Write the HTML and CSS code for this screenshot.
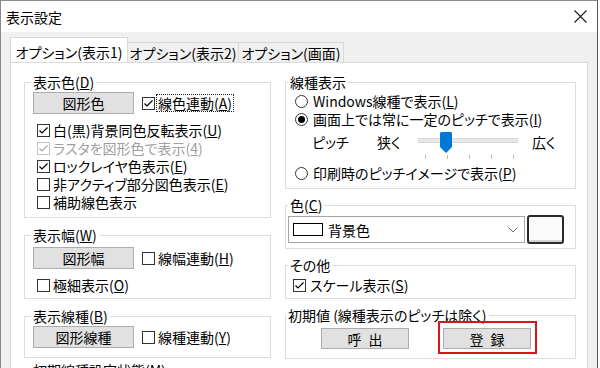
FILE: index.html
```html
<!DOCTYPE html>
<html lang="ja">
<head>
<meta charset="utf-8">
<title>表示設定</title>
<link rel="stylesheet" href="styles.css">
</head>
<body>
<div class="window">
  <div class="titlebar">
    <span class="title">表示設定</span>
    <svg class="close" width="13" height="13" viewBox="0 0 13 13"><path d="M0.5 0.5L12.5 12.5M12.5 0.5L0.5 12.5" stroke="#1a1a1a" stroke-width="1.1" fill="none"/></svg>
  </div>
  <div class="client">
    <div class="tabs">
      <div class="tab tab1 active">オプション(表示1)</div>
      <div class="tab tab2">オプション(表示2)</div>
      <div class="tab tab3">オプション(画面)</div>
    </div>
    <div class="panel">
      <div class="col col-left">
        <fieldset class="grp">
          <legend>表示色(<u>D</u>)</legend>
          <div class="body b-color">
            <div class="btnrow">
              <button class="btn btn-fig">図形色</button>
              <label class="chk"><svg class="cb" width="13" height="13" viewBox="0 0 13 13"><rect x="0.5" y="0.5" width="12" height="12" fill="#fff" stroke="#333"/><path d="M2.5 6.5L5 9L10.5 3.5" fill="none" stroke="#000" stroke-width="1.2"/></svg><span class="focus">線色連動(<u>A</u>)</span></label>
            </div>
            <div class="list">
              <label class="chk"><svg class="cb" width="13" height="13" viewBox="0 0 13 13"><rect x="0.5" y="0.5" width="12" height="12" fill="#fff" stroke="#333"/><path d="M2.5 6.5L5 9L10.5 3.5" fill="none" stroke="#000" stroke-width="1.2"/></svg><span>白(黒)背景同色反転表示(<u>U</u>)</span></label>
              <label class="chk dis"><svg class="cb" width="13" height="13" viewBox="0 0 13 13"><rect x="0.5" y="0.5" width="12" height="12" fill="#fff" stroke="#c4c4c4"/><path d="M2.5 6.5L5 9L10.5 3.5" fill="none" stroke="#a8a8a8" stroke-width="1.2"/></svg><span>ラスタを図形色で表示(<u>4</u>)</span></label>
              <label class="chk"><svg class="cb" width="13" height="13" viewBox="0 0 13 13"><rect x="0.5" y="0.5" width="12" height="12" fill="#fff" stroke="#333"/><path d="M2.5 6.5L5 9L10.5 3.5" fill="none" stroke="#000" stroke-width="1.2"/></svg><span>ロックレイヤ色表示(<u>E</u>)</span></label>
              <label class="chk"><svg class="cb" width="13" height="13" viewBox="0 0 13 13"><rect x="0.5" y="0.5" width="12" height="12" fill="#fff" stroke="#333"/></svg><span>非アクティブ部分図色表示(<u>E</u>)</span></label>
              <label class="chk"><svg class="cb" width="13" height="13" viewBox="0 0 13 13"><rect x="0.5" y="0.5" width="12" height="12" fill="#fff" stroke="#333"/></svg><span>補助線色表示</span></label>
            </div>
          </div>
        </fieldset>
        <fieldset class="grp">
          <legend>表示幅(<u>W</u>)</legend>
          <div class="body b-width">
            <div class="btnrow">
              <button class="btn btn-fig">図形幅</button>
              <label class="chk"><svg class="cb" width="13" height="13" viewBox="0 0 13 13"><rect x="0.5" y="0.5" width="12" height="12" fill="#fff" stroke="#333"/></svg><span>線幅連動(<u>H</u>)</span></label>
            </div>
            <div class="list">
              <label class="chk"><svg class="cb" width="13" height="13" viewBox="0 0 13 13"><rect x="0.5" y="0.5" width="12" height="12" fill="#fff" stroke="#333"/></svg><span>極細表示(<u>O</u>)</span></label>
            </div>
          </div>
        </fieldset>
        <fieldset class="grp">
          <legend>表示線種(<u>B</u>)</legend>
          <div class="body b-ltype">
            <div class="btnrow">
              <button class="btn btn-fig">図形線種</button>
              <label class="chk"><svg class="cb" width="13" height="13" viewBox="0 0 13 13"><rect x="0.5" y="0.5" width="12" height="12" fill="#fff" stroke="#333"/></svg><span>線種連動(<u>Y</u>)</span></label>
            </div>
          </div>
        </fieldset>
        <div class="cutoff">初期線種設定状態(<u>M</u>)</div>
      </div>

      <div class="col col-right">
        <fieldset class="grp">
          <legend>線種表示</legend>
          <div class="body b-line">
            <label class="chk rad"><svg class="rb" width="13" height="13" viewBox="0 0 13 13"><circle cx="6.5" cy="6.5" r="6" fill="#fff" stroke="#333"/></svg><span>Windows線種で表示(<u>L</u>)</span></label>
            <label class="chk rad"><svg class="rb" width="13" height="13" viewBox="0 0 13 13"><circle cx="6.5" cy="6.5" r="6" fill="#fff" stroke="#333"/><circle cx="6.5" cy="6.5" r="3.5" fill="#000"/></svg><span>画面上では常に一定のピッチで表示(<u>I</u>)</span></label>
            <div class="slider-row">
              <span class="sl-lbl sl-pitch">ピッチ</span>
              <span class="sl-lbl sl-narrow">狭く</span>
              <div class="slider">
                <div class="track"></div>
                <div class="ticks"><i></i><i class="cur"></i><i></i><i></i><i></i></div>
                <svg class="thumb" width="12" height="21" viewBox="0 0 12 21"><path d="M1.5 0H10.5A1.5 1.5 0 0 1 12 1.5V15L6 21L0 15V1.5A1.5 1.5 0 0 1 1.5 0Z" fill="#0078d7"/></svg>
              </div>
              <span class="sl-lbl sl-wide">広く</span>
            </div>
            <label class="chk rad"><svg class="rb" width="13" height="13" viewBox="0 0 13 13"><circle cx="6.5" cy="6.5" r="6" fill="#fff" stroke="#333"/></svg><span>印刷時のピッチイメージで表示(<u>P</u>)</span></label>
          </div>
        </fieldset>
        <fieldset class="grp">
          <legend>色(<u>C</u>)</legend>
          <div class="body b-clr">
            <div class="combo">
              <span class="swatch"></span>
              <span class="combo-text">背景色</span>
              <svg class="chev" width="10" height="6" viewBox="0 0 10 6"><path d="M0.5 0.5L5 5L9.5 0.5" fill="none" stroke="#707070" stroke-width="1"/></svg>
            </div>
            <button class="sqbtn"></button>
          </div>
        </fieldset>
        <fieldset class="grp">
          <legend>その他</legend>
          <div class="body b-other">
            <label class="chk"><svg class="cb" width="13" height="13" viewBox="0 0 13 13"><rect x="0.5" y="0.5" width="12" height="12" fill="#fff" stroke="#333"/><path d="M2.5 6.5L5 9L10.5 3.5" fill="none" stroke="#000" stroke-width="1.2"/></svg><span>スケール表示(<u>S</u>)</span></label>
          </div>
        </fieldset>
        <fieldset class="grp">
          <legend class="lg-init">初期値 (線種表示のピッチは除く)</legend>
          <div class="body b-init">
            <button class="btn btn-act btn-call">呼 出</button>
            <div class="mark">
              <button class="btn btn-act">登 録</button>
            </div>
          </div>
        </fieldset>
      </div>
    </div>
  </div>
</div>
</body>
</html>
```
FILE: styles.css
```css
* { box-sizing: border-box; }
html, body { margin: 0; padding: 0; background: #fff; }
body {
  font-family: "Noto Sans CJK JP", "Noto Sans", sans-serif;
  font-size: 14px;
  color: #000;
  font-feature-settings: "palt";
}
u { text-underline-offset: 1px; text-decoration-thickness: 1px; }

.window {
  width: 598px;
  height: 368px;
  border: 1px solid #8a8a8a;
  border-right-color: #555;
  border-bottom: none;
  background: #f0f0f0;
  overflow: hidden;
  display: flex;
  flex-direction: column;
}

.titlebar {
  height: 31px;
  flex: none;
  background: #fff;
  display: flex;
  align-items: center;
  justify-content: space-between;
  padding: 0 10px 0 5px;
}
.title { line-height: 18px; }
.close { display: block; }

.client {
  flex: 1;
  padding: 5px 0 0 9px;
  display: flex;
  flex-direction: column;
}

.tabs {
  display: flex;
  align-items: flex-end;
  height: 26px;
  margin-bottom: -1px;
  flex: none;
}
.tab {
  border: 1px solid #d9d9d9;
  border-bottom: none;
  line-height: 18px;
  text-align: center;
  background: #f0f0f0;
  height: 20px;
  margin-bottom: 1px;
  padding-top: 1px;
  white-space: nowrap;
}
.tab.active {
  background: #fff;
  height: 26px;
  margin-bottom: 0;
  padding-top: 5px;
}
.tab1 { width: 118px; }
.tab2 { width: 112px; margin-left: -1px; }
.tab3 { width: 106px; margin-left: -1px; }

.panel {
  width: 578px;
  flex: 1;
  background: #fff;
  border: 1px solid #d9d9d9;
  display: flex;
  gap: 14px;
  padding: 10px 0 0 13px;
}

.col { display: flex; flex-direction: column; }
.col-left { width: 247px; gap: 8px; }
.col-right { width: 291px; gap: 7px; }

.grp {
  margin: 0;
  padding: 0;
  border: 1px solid #dcdcdc;
  min-width: 0;
}
.grp > legend {
  padding: 0 2px;
  line-height: 18px;
  height: 18px;
  white-space: nowrap;
}
.col-left .grp > legend { margin-left: 6px; }
.col-right .grp > legend { margin-left: 2px; }
.col-right .grp > legend.lg-init { margin-left: 0; }

.body { display: flex; flex-direction: column; }

.btnrow { display: flex; align-items: center; gap: 8px; }

.btn {
  font: inherit;
  font-feature-settings: "palt";
  color: #000;
  background: #e1e1e1;
  border: 1px solid #adadad;
  padding: 0;
  margin: 0;
  height: 22px;
  line-height: 18px;
  text-align: center;
}
.btn-fig { width: 101px; }

.chk {
  display: flex;
  align-items: center;
  height: 18px;
  line-height: 18px;
  gap: 3px;
  white-space: nowrap;
}
.chk .cb, .chk .rb { display: block; flex: none; }
.chk.dis { color: #a0a0a0; }
.chk.rad { gap: 5px; }

.focus {
  display: inline-block;
  height: 16px;
  line-height: 16px;
  outline: 1px dotted #222;
  padding: 0 1px;
  margin-left: -1px;
}

.list { display: flex; flex-direction: column; margin-top: 7px; padding-left: 4px; }

.b-color { padding: 1px 0 6px 8px; }
.b-width { padding: 3px 0 4px 8px; }
.b-width .list { margin-top: 7px; }
.b-ltype { padding: 1px 0 9px 8px; }

.cutoff {
  margin-top: -5px;
  padding-left: 9px;
  line-height: 18px;
  white-space: nowrap;
}

/* right column */
.b-line { padding: 1px 0 6px 9px; }

.slider-row {
  display: flex;
  align-items: flex-start;
  height: 36px;
}
.sl-lbl { line-height: 18px; margin-top: 5px; white-space: nowrap; }
.sl-pitch { width: 65px; margin-left: 17px; }
.sl-narrow { width: 41px; }
.sl-wide { margin-left: 14px; }
.slider {
  width: 100px;
  height: 36px;
  position: relative;
  display: flex;
  flex-direction: column;
}
.track {
  margin-top: 10px;
  height: 5px;
  background: #e7e7e7;
  border: 1px solid #d8d8d8;
}
.ticks {
  display: flex;
  gap: 21px;
  padding-left: 7px;
  margin-top: 12px;
}
.ticks i { display: block; width: 1px; height: 4px; background: #bdbdbd; }
.ticks i.cur { background: #c8b98a; }
.thumb { position: absolute; left: 22px; top: 4px; display: block; }

.b-clr {
  padding: 1px 0 4px 2px;
  flex-direction: row;
  align-items: center;
}
.combo {
  width: 237px;
  height: 27px;
  border: 1px solid #a5a5a5;
  background: #fff;
  display: flex;
  align-items: center;
  padding-left: 4px;
}
.swatch {
  width: 30px;
  height: 13px;
  border: 1px solid #000;
  background: #fff;
  flex: none;
}
.combo-text { margin-left: 5px; line-height: 18px; }
.chev { margin-left: auto; margin-right: 6px; display: block; }
.sqbtn {
  margin: 0 0 0 2px;
  padding: 0;
  width: 37px;
  height: 29px;
  border: 2px solid #2a2a2a;
  border-radius: 3px;
  background: #fbfbfb;
  box-shadow: inset 0 -2px 0 #d4d4d4;
}

.b-other { padding: 2px 0 4px 7px; }
.b-other .chk { gap: 4px; }

.b-init {
  flex-direction: row;
  align-items: flex-start;
  padding: 0 0 4px 35px;
}
.btn-act { width: 88px; height: 21px; word-spacing: 4px; }
.btn-call { margin-top: 4px; }
.mark {
  margin: -3px 0 0 29px;
  border: 2px solid #d9141b;
  padding: 5px 4px 3px 3px;
}
.mark .btn { display: block; }
```
